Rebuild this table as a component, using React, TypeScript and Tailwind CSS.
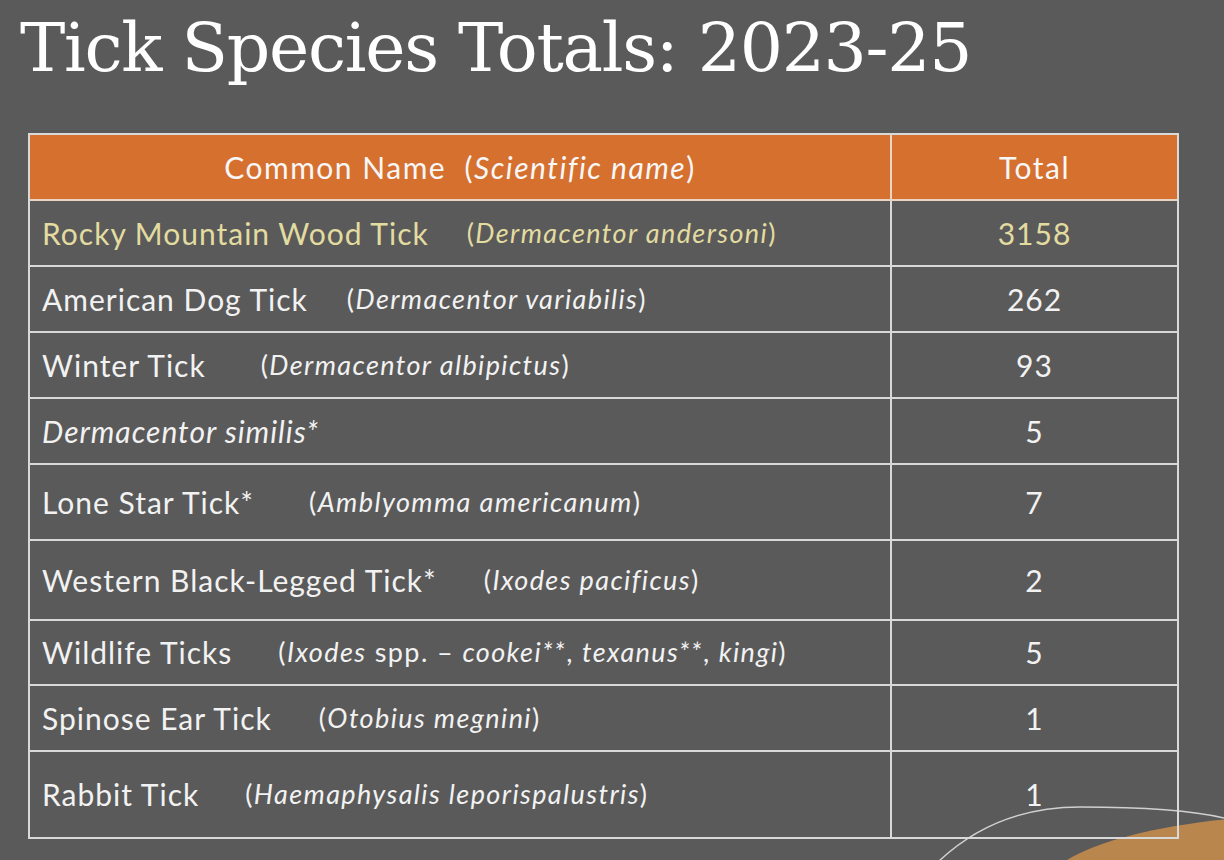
import React from "react";

type Row = {
  common: React.ReactNode;
  sci?: React.ReactNode;
  gap: string;
  total: string;
  h: string;
  highlight?: boolean;
};

const rows: Row[] = [
  { common: "Rocky Mountain Wood Tick", sci: <>(<i>Dermacentor andersoni</i>)</>, gap: "ml-[38px]", total: "3158", h: "h-[66px]", highlight: true },
  { common: "American Dog Tick", sci: <>(<i>Dermacentor variabilis</i>)</>, gap: "ml-[39px]", total: "262", h: "h-[66px]" },
  { common: "Winter Tick", sci: <>(<i>Dermacentor albipictus</i>)</>, gap: "ml-[55px]", total: "93", h: "h-[66px]" },
  { common: <i>Dermacentor similis*</i>, gap: "ml-0", total: "5", h: "h-[66px]" },
  { common: "Lone Star Tick*", sci: <>(<i>Amblyomma americanum</i>)</>, gap: "ml-[55px]", total: "7", h: "h-[76px]" },
  { common: "Western Black-Legged Tick*", sci: <>(<i>Ixodes pacificus</i>)</>, gap: "ml-[47px]", total: "2", h: "h-[80px]" },
  { common: "Wildlife Ticks", sci: <>(<i>Ixodes</i> spp. – <i>cookei**</i>, <i>texanus**</i>, <i>kingi</i>)</>, gap: "ml-[46px]", total: "5", h: "h-[65px]" },
  { common: "Spinose Ear Tick", sci: <>(<i>Otobius megnini</i>)</>, gap: "ml-[47px]", total: "1", h: "h-[66px]" },
  { common: "Rabbit Tick", sci: <>(<i>Haemaphysalis leporispalustris</i>)</>, gap: "ml-[46px]", total: "1", h: "h-[85px]" },
];

export default function App() {
  return (
    <div className="relative w-[1224px] h-[860px] overflow-hidden bg-[#5a5a5a] font-['Lato','Open_Sans',sans-serif]">
      <svg className="absolute left-0 top-0 w-[1224px] h-[860px] pointer-events-none" viewBox="0 0 1224 860">
        <ellipse cx="1300" cy="900" rx="265" ry="84" fill="#b9874e" />
        <path d="M938 862 C 980 822, 1030 807, 1080 807 C 1140 807, 1190 810, 1224 818" stroke="#d0d0d0" strokeWidth="1.5" fill="none" />
      </svg>
      <h1 className="relative pl-[20px] pt-[8px] h-[133px] text-[68px] leading-[80px] text-white font-['DejaVu_Serif','Liberation_Serif',serif] tracking-[-1.3px]">
        Tick Species Totals: 2023-25
      </h1>
      <div className="relative ml-[28px] w-[1151px] border-2 border-[#d9d9d9]">
        <div className="flex h-[66px] bg-[#d6702f] text-[#f7f7f7] text-[30px] tracking-[1.5px] border-b-2 border-[#e9d5c4]">
          <div className="w-[862px] flex items-center justify-center border-r-2 border-[#e9d5c4]">
            Common Name&nbsp;&nbsp;(<i>Scientific name</i>)
          </div>
          <div className="flex-1 flex items-center justify-center">Total</div>
        </div>
        {rows.map((r, i) => (
          <div
            key={i}
            className={`flex ${r.h} ${i < rows.length - 1 ? "border-b-2" : ""} border-[#d9d9d9] ${r.highlight ? "text-[#e3dca0]" : "text-[#f2f2f2]"}`}
          >
            <div className="w-[862px] flex items-center pl-[12px] border-r-2 border-[#d9d9d9] whitespace-nowrap">
              <span className="text-[30px] tracking-[1px]">{r.common}</span>
              {r.sci && <span className={`${r.gap} text-[27px] tracking-[1.4px]`}>{r.sci}</span>}
            </div>
            <div className="flex-1 flex items-center justify-center text-[30px] tracking-[1px]">{r.total}</div>
          </div>
        ))}
      </div>
    </div>
  );
}
